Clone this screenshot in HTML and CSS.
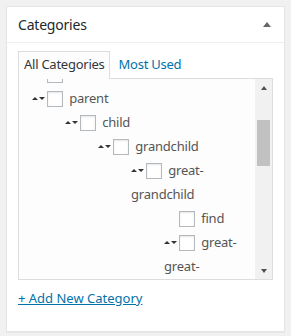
FILE: index.html
```html
<!DOCTYPE html>
<html>
<head>
<meta charset="UTF-8">
<title>Categories</title>
<link rel="stylesheet" href="styles.css">
</head>
<body>
<div class="postbox">
  <div class="postbox-header">
    <h2 class="hndle">Categories</h2>
    <span class="toggle-indicator"></span>
  </div>
  <div class="inside">
    <ul class="category-tabs">
      <li class="tabs">All Categories</li>
      <li class="tab-link"><a href="#">Most Used</a></li>
    </ul>
    <div class="tabs-panel">
      <div class="checklist-view">
        <ul class="categorychecklist">
          <li><span class="order"></span><input type="checkbox"> News</li>
          <li><span class="order"><i class="up"></i><i class="down"></i></span><input type="checkbox"> parent
            <ul class="children">
              <li><span class="order"><i class="up"></i><i class="down"></i></span><input type="checkbox"> child
                <ul class="children">
                  <li><span class="order"><i class="up"></i><i class="down"></i></span><input type="checkbox"> grandchild
                    <ul class="children">
                      <li><span class="order"><i class="up"></i><i class="down"></i></span><input type="checkbox"> great-grandchild
                        <ul class="children">
                          <li><span class="order"></span><input type="checkbox"> find</li>
                          <li><span class="order"><i class="up"></i><i class="down"></i></span><input type="checkbox"> great-great-grandchild</li>
                        </ul>
                      </li>
                    </ul>
                  </li>
                </ul>
              </li>
            </ul>
          </li>
        </ul>
      </div>
      <div class="scrollbar">
        <div class="scroll-btn"><i class="arrow-up"></i></div>
        <div class="scroll-track"><div class="scroll-thumb"></div></div>
        <div class="scroll-btn"><i class="arrow-down"></i></div>
      </div>
    </div>
    <p class="add-new"><a href="#">+ Add New Category</a></p>
  </div>
</div>
</body>
</html>
```

FILE: styles.css
```css
body {
  margin: 0;
  padding: 6px;
  background-color: #f1f1f1;
  font-family: "Noto Sans", "Open Sans", sans-serif;
  font-size: 13px;
  color: #444;
}

.postbox {
  background-color: #fff;
  border: 1px solid #e5e5e5;
  box-shadow: 0 1px 1px rgba(0, 0, 0, .04);
}

.postbox-header {
  height: 35px;
  display: flex;
  align-items: center;
  justify-content: space-between;
  padding: 0 13px 0 11px;
  border-bottom: 1px solid #eee;
}

.hndle {
  margin: 0;
  font-size: 14px;
  font-weight: 400;
  letter-spacing: -0.2px;
  color: #23282d;
}

.toggle-indicator {
  width: 0;
  height: 0;
  border-left: 4px solid transparent;
  border-right: 4px solid transparent;
  border-bottom: 5px solid #666;
}

.inside {
  padding: 8px 11px 24px;
}

.category-tabs {
  display: flex;
  margin: 0;
  padding: 0;
  list-style: none;
  letter-spacing: -0.25px;
}

.category-tabs li {
  line-height: 18px;
  padding: 3px 4px 5px 5px;
}

.category-tabs .tabs {
  position: relative;
  margin-bottom: -1px;
  border: 1px solid #ddd;
  border-bottom: none;
  background-color: #fdfdfd;
  color: #32373c;
}

.category-tabs .tab-link {
  margin-top: 1px;
  margin-left: 4px;
}

.category-tabs a {
  color: #0073aa;
  text-decoration: none;
}

.tabs-panel {
  display: flex;
  height: 200px;
  border: 1px solid #ddd;
  background-color: #fdfdfd;
}

.checklist-view {
  flex: 1;
  overflow: hidden;
}

.categorychecklist {
  margin: -17px 0 0;
  padding: 0 0 0 13px;
  list-style: none;
}

.categorychecklist li {
  line-height: 24px;
  color: #555;
  letter-spacing: -0.2px;
}

.categorychecklist .children {
  margin: 0 0 0 33px;
  padding: 0;
  list-style: none;
}

.order {
  display: inline-block;
  width: 13px;
  margin-right: 2px;
  vertical-align: middle;
  position: relative;
  top: -2px;
  line-height: 0;
}

.order i {
  display: inline-block;
  width: 0;
  height: 0;
  border-left: 3px solid transparent;
  border-right: 3px solid transparent;
}

.order .up {
  border-bottom: 3px solid #333;
}

.order .down {
  margin-left: 1px;
  border-top: 3px solid #333;
}

.categorychecklist input {
  appearance: none;
  -webkit-appearance: none;
  width: 16px;
  height: 16px;
  margin: 0 3px 0 0;
  border: 1px solid #b4b9be;
  background-color: #fff;
  box-shadow: inset 0 1px 2px rgba(0, 0, 0, .1);
  vertical-align: middle;
  position: relative;
  top: -1px;
}

.scrollbar {
  width: 17px;
  display: flex;
  flex-direction: column;
  background-color: #f1f1f1;
}

.scroll-btn {
  height: 17px;
  display: flex;
  align-items: center;
  justify-content: center;
}

.arrow-up,
.arrow-down {
  width: 0;
  height: 0;
  border-left: 3.5px solid transparent;
  border-right: 3.5px solid transparent;
}

.arrow-up {
  border-bottom: 4px solid #505050;
}

.arrow-down {
  border-top: 4px solid #505050;
}

.scroll-track {
  flex: 1;
  padding-top: 24px;
}

.scroll-thumb {
  height: 46px;
  margin: 0 2px;
  background-color: #c1c1c1;
}

.add-new {
  margin: 9px 0 0;
  line-height: 18px;
}

.add-new a {
  color: #0073aa;
}
```
